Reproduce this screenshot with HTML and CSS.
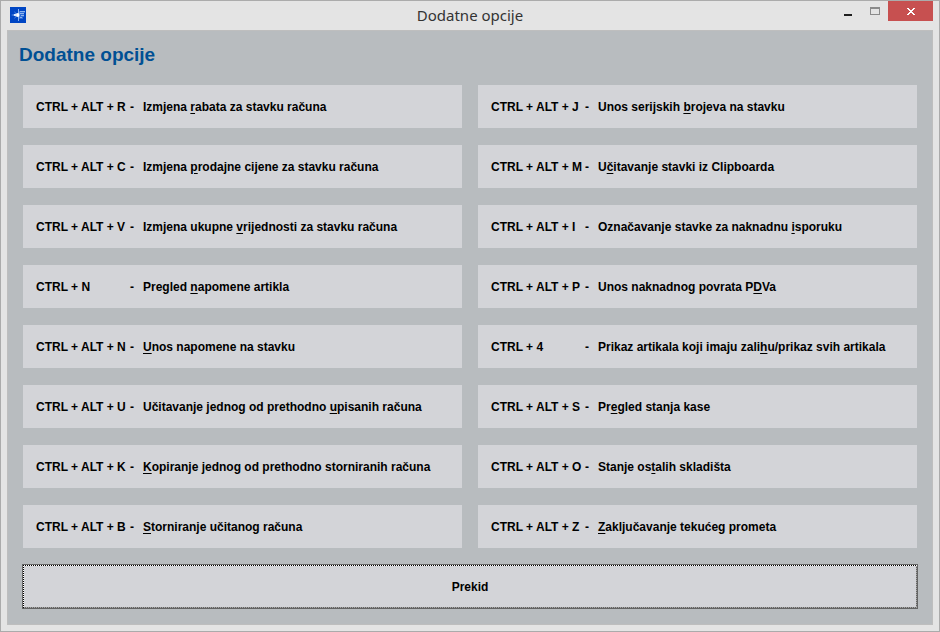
FILE: index.html
```html
<!DOCTYPE html>
<html lang="hr">
<head>
  <meta charset="UTF-8" />
  <meta name="viewport" content="width=device-width, initial-scale=1.0"/>
  <title>Dodatne opcije</title>
  <link rel="stylesheet" href="styles.css">
</head>
<body>

  <div class="window">
    <header class="titlebar">
      <svg class="app-icon" width="16" height="16" viewBox="0 0 16 16" aria-hidden="true">
        <rect width="16" height="16" fill="#0046c4"/>
        <path d="M9 4h6v2h-1v4h-1v2h-3v-2H9z" fill="#2f6cd6"/>
        <path d="M10 4h5v1h-5zM10 6h4v1h-4zM11 8h3v1h-3zM10 10h2v1h-2z" fill="#8db4ee"/>
        <path d="M4 4l3 3 2-2 1 1-2 2 2 3-1 1-2-3-3 3 2-4z" fill="#5c90e2"/>
        <path d="M8 2h1v4l1 2-1 2v4H8v-4L6 9 1 8l5-1 2-1z" fill="#8db4ee"/>
        <path d="M4 7h2l1-1h2v4H7L6 9H4z" fill="#dbe8fc"/>
        <rect x="7" y="7" width="2" height="2" fill="#fff"/>
      </svg>
      <div class="caption">Dodatne opcije</div>
      <div class="window-buttons">
        <button type="button" class="win-btn" aria-label="Minimize">
          <svg width="10" height="10" viewBox="0 0 10 10"><path d="M1 8h8v2H1z" fill="#1e1e1e"/></svg>
        </button>
        <button type="button" class="win-btn" aria-label="Maximize">
          <svg width="10" height="10" viewBox="0 0 10 10"><path d="M0 1h10v8H0zM1 3v5h8V3z" fill="#8a8a8a" fill-rule="evenodd"/></svg>
        </button>
        <button type="button" class="win-btn close" aria-label="Close">
          <svg width="8" height="7" viewBox="0 0 8 7" shape-rendering="crispEdges"><path d="M0 0h2v1h1v1h2V1h1V0h2v1H7v1H6v1H5v1h1v1h1v1h1v1H6V6H5V5H3v1H2v1H0V6h1V5h1V4h1V3H2V2H1V1H0z" fill="#fff"/></svg>
        </button>
      </div>
    </header>

    <main class="client">
      <h1>Dodatne opcije</h1>

      <div class="options">
        <button type="button" class="option"><span>CTRL + ALT + R</span><span>-</span><span>Izmjena <u>r</u>abata za stavku računa</span></button>
        <button type="button" class="option"><span>CTRL + ALT + J</span><span>-</span><span>Unos serijskih <u>b</u>rojeva na stavku</span></button>

        <button type="button" class="option"><span>CTRL + ALT + C</span><span>-</span><span>Izmjena <u>p</u>rodajne cijene za stavku računa</span></button>
        <button type="button" class="option"><span>CTRL + ALT + M</span><span>-</span><span>U<u>č</u>itavanje stavki iz Clipboarda</span></button>

        <button type="button" class="option"><span>CTRL + ALT + V</span><span>-</span><span>Izmjena ukupne <u>v</u>rijednosti za stavku računa</span></button>
        <button type="button" class="option"><span>CTRL + ALT + I</span><span>-</span><span>Označavanje stavke za naknadnu <u>i</u>sporuku</span></button>

        <button type="button" class="option"><span>CTRL + N</span><span>-</span><span>Pregled <u>n</u>apomene artikla</span></button>
        <button type="button" class="option"><span>CTRL + ALT + P</span><span>-</span><span>Unos naknadnog povrata P<u>D</u>Va</span></button>

        <button type="button" class="option"><span>CTRL + ALT + N</span><span>-</span><span><u>U</u>nos napomene na stavku</span></button>
        <button type="button" class="option"><span>CTRL + 4</span><span>-</span><span>Prikaz artikala koji imaju zali<u>h</u>u/prikaz svih artikala</span></button>

        <button type="button" class="option"><span>CTRL + ALT + U</span><span>-</span><span>Učitavanje jednog od prethodno <u>u</u>pisanih računa</span></button>
        <button type="button" class="option"><span>CTRL + ALT + S</span><span>-</span><span>Pr<u>e</u>gled stanja kase</span></button>

        <button type="button" class="option"><span>CTRL + ALT + K</span><span>-</span><span><u>K</u>opiranje jednog od prethodno storniranih računa</span></button>
        <button type="button" class="option"><span>CTRL + ALT + O</span><span>-</span><span>Stanje os<u>t</u>alih skladišta</span></button>

        <button type="button" class="option"><span>CTRL + ALT + B</span><span>-</span><span><u>S</u>torniranje učitanog računa</span></button>
        <button type="button" class="option"><span>CTRL + ALT + Z</span><span>-</span><span><u>Z</u>aključavanje tekućeg prometa</span></button>
      </div>

      <button type="button" class="cancel">Prekid</button>
    </main>
  </div>

</body>
</html>
```
FILE: styles.css
```css
* {
  box-sizing: border-box;
}

body {
  margin: 0;
  font-family: "Liberation Sans", Arial, sans-serif;
  background: #e4e4e4;
}

button {
  border: none;
  border-radius: 0;
  font-family: inherit;
  cursor: pointer;
}

.window {
  display: flex;
  flex-direction: column;
  min-height: 100vh;
  padding: 0 6px 6px;
  border: 1px solid #ababab;
  background: #e4e4e4;
}

/* title bar */
.titlebar {
  display: grid;
  grid-template-columns: 1fr auto 1fr;
  align-items: start;
  height: 29px;
}

.app-icon {
  margin: 6px 0 0 3px;
}

.caption {
  font-family: "Noto Sans", "Open Sans", sans-serif;
  font-size: 15px;
  line-height: 29px;
  color: #333;
}

.window-buttons {
  display: flex;
  justify-content: flex-end;
}

.win-btn {
  display: flex;
  align-items: center;
  justify-content: center;
  width: 27px;
  height: 20px;
  padding: 0;
  background: transparent;
}

.win-btn.close {
  width: 45px;
  padding-top: 1px;
  background: #c75050;
}

/* dialog content */
.client {
  flex: 1;
  padding: 12px 15px 15px;
  border: 1px solid #bebebe;
  background: #b8bcbf;
}

h1 {
  margin: 0 -4px 18px;
  font-size: 19px;
  line-height: 24px;
  color: #005094;
}

.options {
  display: grid;
  grid-template-columns: 1fr 1fr;
  gap: 17px 16px;
}

/* shortcut, dash, description */
.option {
  display: grid;
  grid-template-columns: 94px 13px 1fr;
  align-items: center;
  height: 43px;
  padding: 0 13px;
  background: #d3d4d8;
  color: #000;
  font-size: 12px;
  font-weight: bold;
  text-align: left;
  white-space: nowrap;
}

.option u {
  text-underline-offset: 2px;
}

/* default button with the dotted focus line inside its frame */
.cancel {
  display: block;
  width: calc(100% + 2px);
  height: 45px;
  margin: 16px -1px 0;
  border: 1px solid #646464;
  background:
    repeating-linear-gradient(90deg, #000 0 1px, #fff 1px 2px) top / 100% 1px no-repeat,
    repeating-linear-gradient(180deg, #000 0 1px, #fff 1px 2px) left / 1px 100% no-repeat,
    repeating-linear-gradient(90deg, #646464 0 1px, #a8a8a8 1px 2px) bottom / 100% 1px no-repeat,
    repeating-linear-gradient(180deg, #646464 0 1px, #a8a8a8 1px 2px) right / 1px 100% no-repeat,
    #d3d4d8;
  color: #000;
  font-size: 12px;
  font-weight: bold;
}
```
